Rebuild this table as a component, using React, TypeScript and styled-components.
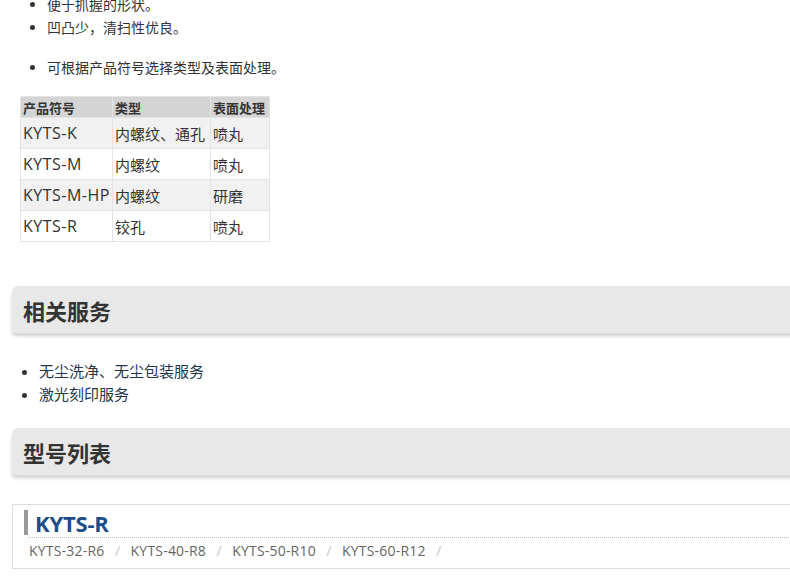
import React from 'react';
import styled, { createGlobalStyle } from 'styled-components';

const GlobalStyle = createGlobalStyle`
  html, body {
    margin: 0;
    padding: 0;
    background: #fff;
    overflow: hidden;
  }
  body {
    font-family: "Open Sans", "Noto Sans CJK SC", sans-serif;
    color: #333;
  }
`;

const Page = styled.div`
  width: 830px;
  padding-left: 12px;
  margin-top: -7px;
`;

const BulletList = styled.ul<{ $indent?: number; $top?: number; $gap?: number; $size?: number }>`
  margin: ${p => p.$top ?? 0}px 0 ${p => p.$gap ?? 0}px ${p => p.$indent ?? 0}px;
  padding-left: 35px;
  list-style: disc;
  font-size: ${p => p.$size ?? 14}px;
  line-height: 23px;
  color: #333;
`;

const SpecTable = styled.table`
  margin-left: 8px;
  border-collapse: collapse;
  table-layout: fixed;
  width: 249px;
  font-size: 15px;
  color: #333;
`;

const HeadCell = styled.th<{ $w: number }>`
  width: ${p => p.$w}px;
  box-sizing: border-box;
  height: 21px;
  padding: 0 2px;
  background: #d4d4d4;
  font-size: 13px;
  font-weight: bold;
  text-align: left;
  border: 1px solid #e4e4e4;
  white-space: nowrap;
`;

const Row = styled.tr<{ $shade: boolean }>`
  background: ${p => (p.$shade ? '#f1f1f1' : '#fff')};
`;

const Cell = styled.td<{ $latin?: boolean }>`
  height: 30px;
  padding: 0 2px;
  border: 1px solid #e4e4e4;
  white-space: nowrap;
  overflow: visible;
  font-size: ${p => (p.$latin ? 16 : 15)}px;
  letter-spacing: ${p => (p.$latin ? '0.5px' : '0')};
`;

const SectionTitle = styled.h2<{ $top: number }>`
  box-sizing: border-box;
  margin: ${p => p.$top}px 0 0 0;
  height: 48px;
  display: flex;
  align-items: center;
  padding-left: 11px;
  background: #e8e8e8;
  border-radius: 6px 0 0 0;
  border-bottom: 1px solid #dedede;
  box-shadow: -2px 4px 4px -3px rgba(0, 0, 0, 0.28);
  font-size: 22px;
  font-weight: bold;
  color: #333;
  font-family: "Noto Sans CJK SC", sans-serif;
`;

const ServiceLink = styled.a`
  color: #22354a;
  text-decoration: none;
`;

const ModelBox = styled.div`
  margin-top: 28px;
  border: 1px solid #dcdcdc;
  padding: 5px 0 6px 11px;
`;

const ModelName = styled.h3`
  margin: 0;
  padding-left: 7px;
  border-left: 4px solid #999;
  height: 25px;
  display: flex;
  align-items: center;
  font-size: 22px;
  font-weight: bold;
  color: #1d4d87;
  letter-spacing: -0.2px;
`;

const Rule = styled.div`
  margin-top: 2px;
  margin-left: 4px;
  border-top: 1px dotted #bbb;
`;

const ModelRow = styled.div`
  display: flex;
  align-items: center;
  padding-left: 5px;
  height: 24px;
  font-size: 14px;
  color: #666;
`;

const ModelItem = styled.a`
  color: #666;
  text-decoration: none;
  letter-spacing: 0.2px;
`;

const Slash = styled.span`
  color: #c8c8c8;
  margin: 0 10.5px;
`;

const rows = [
  ['KYTS-K', '内螺纹、通孔', '喷丸'],
  ['KYTS-M', '内螺纹', '喷丸'],
  ['KYTS-M-HP', '内螺纹', '研磨'],
  ['KYTS-R', '铰孔', '喷丸'],
];

const models = ['KYTS-32-R6', 'KYTS-40-R8', 'KYTS-50-R10', 'KYTS-60-R12'];

export default function App() {
  return (
    <>
      <GlobalStyle />
      <Page>
        <BulletList $gap={17}>
          <li>便于抓握的形状。</li>
          <li>凹凸少，清扫性优良。</li>
        </BulletList>
        <BulletList $gap={17}>
          <li>可根据产品符号选择类型及表面处理。</li>
        </BulletList>

        <SpecTable>
          <thead>
            <tr>
              <HeadCell $w={92}>产品符号</HeadCell>
              <HeadCell $w={98}>类型</HeadCell>
              <HeadCell $w={59}>表面处理</HeadCell>
            </tr>
          </thead>
          <tbody>
            {rows.map((r, i) => (
              <Row key={r[0]} $shade={i % 2 === 0}>
                {r.map((c, j) => (
                  <Cell key={c} $latin={j === 0}>{c}</Cell>
                ))}
              </Row>
            ))}
          </tbody>
        </SpecTable>

        <SectionTitle $top={44}>相关服务</SectionTitle>
        <BulletList $indent={-8} $top={26} $size={15}>
          <li><ServiceLink href="#">无尘洗净、无尘包装服务</ServiceLink></li>
          <li><ServiceLink href="#">激光刻印服务</ServiceLink></li>
        </BulletList>

        <SectionTitle $top={22}>型号列表</SectionTitle>
        <ModelBox>
          <ModelName>KYTS-R</ModelName>
          <Rule />
          <ModelRow>
            {models.map(m => (
              <React.Fragment key={m}>
                <ModelItem href="#">{m}</ModelItem>
                <Slash>/</Slash>
              </React.Fragment>
            ))}
          </ModelRow>
        </ModelBox>
      </Page>
    </>
  );
}
